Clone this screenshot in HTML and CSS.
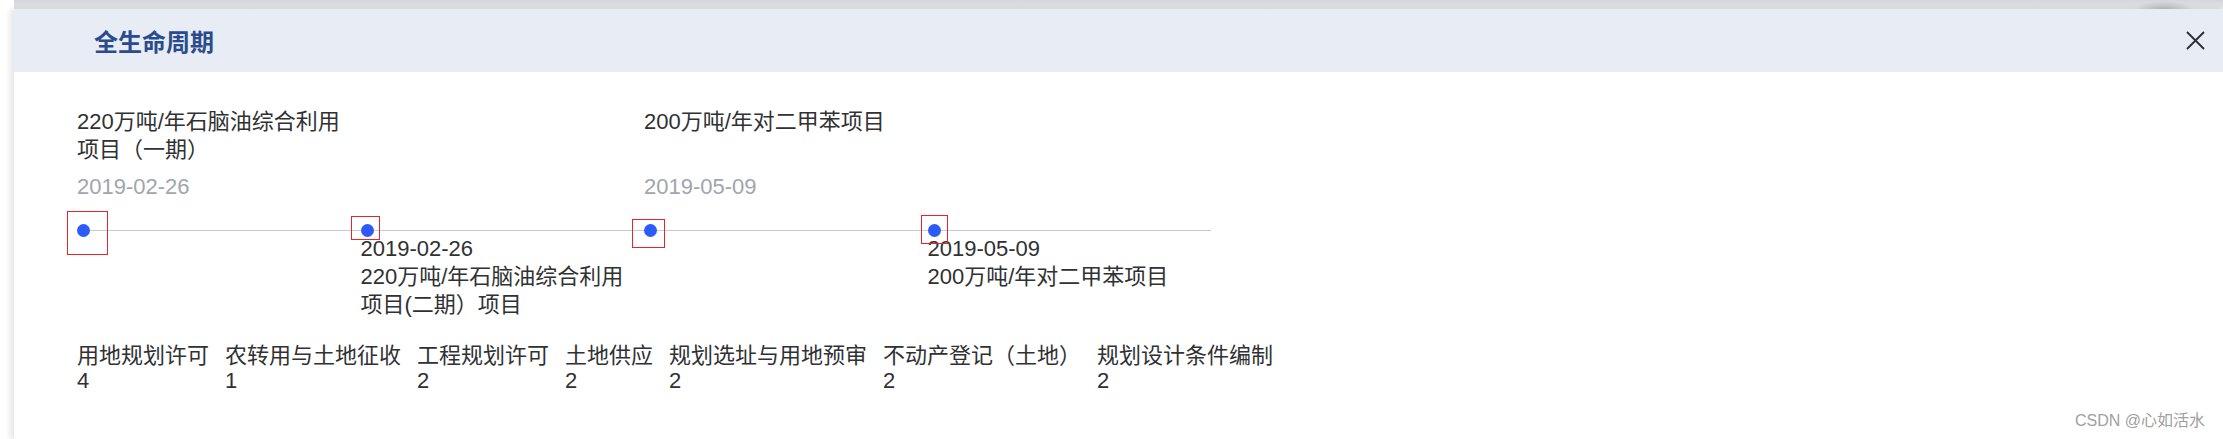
FILE: index.html
```html
<!DOCTYPE html>
<html lang="zh-CN">
<head>
  <meta charset="UTF-8">
  <meta name="viewport" content="width=device-width, initial-scale=1.0">
  <title>全生命周期</title>
  <link rel="stylesheet" href="styles.css">
</head>
<body>

  <div class="frame">
    <div class="top-shade"></div>

    <div class="dialog">
      <div class="dialog-header">
        <h2 class="dialog-title">全生命周期</h2>
        <svg class="close-btn" viewBox="0 0 19 19">
          <path d="M1 1 L18 18 M18 1 L1 18" stroke="#2b2d31" stroke-width="1.8" fill="none"/>
        </svg>
      </div>

      <div class="dialog-body">
        <div class="timeline">
          <div class="node">
            <div class="node-top">
              <p class="node-title">220万吨/年石脑油综合利用项目（一期）</p>
              <p class="node-date">2019-02-26</p>
            </div>
            <div class="node-axis">
              <span class="dot"></span>
              <span class="axis-line"></span>
              <span class="mark mark-1"></span>
            </div>
            <div class="node-bottom"></div>
          </div>

          <div class="node">
            <div class="node-top"></div>
            <div class="node-axis">
              <span class="dot"></span>
              <span class="axis-line"></span>
              <span class="mark mark-2"></span>
            </div>
            <div class="node-bottom">
              <p>2019-02-26</p>
              <p>220万吨/年石脑油综合利用项目(二期）项目</p>
            </div>
          </div>

          <div class="node">
            <div class="node-top">
              <p class="node-title">200万吨/年对二甲苯项目</p>
              <p class="node-date">2019-05-09</p>
            </div>
            <div class="node-axis">
              <span class="dot"></span>
              <span class="axis-line"></span>
              <span class="mark mark-3"></span>
            </div>
            <div class="node-bottom"></div>
          </div>

          <div class="node">
            <div class="node-top"></div>
            <div class="node-axis">
              <span class="dot"></span>
              <span class="axis-line"></span>
              <span class="mark mark-4"></span>
            </div>
            <div class="node-bottom">
              <p>2019-05-09</p>
              <p>200万吨/年对二甲苯项目</p>
            </div>
          </div>
        </div>

        <div class="stats">
          <div class="stat"><p>用地规划许可</p><p>4</p></div>
          <div class="stat"><p>农转用与土地征收</p><p>1</p></div>
          <div class="stat"><p>工程规划许可</p><p>2</p></div>
          <div class="stat"><p>土地供应</p><p>2</p></div>
          <div class="stat"><p>规划选址与用地预审</p><p>2</p></div>
          <div class="stat"><p>不动产登记（土地）</p><p>2</p></div>
          <div class="stat"><p>规划设计条件编制</p><p>2</p></div>
        </div>
      </div>

      <span class="watermark">CSDN @心如活水</span>
    </div>
  </div>

</body>
</html>
```

FILE: styles.css
```css
* {
  box-sizing: border-box;
  margin: 0;
  padding: 0;
}

body {
  width: 2223px;
  height: 439px;
  overflow: hidden;
  background: #fff;
  font-family: "Liberation Sans", "Noto Sans CJK SC", sans-serif;
  color: #303133;
}

.frame {
  margin-left: 14px;
  height: 100%;
  display: flex;
  flex-direction: column;
}

.top-shade {
  height: 9px;
  background: radial-gradient(ellipse 30px 8px at 2150px 9px, rgba(0, 0, 0, 0.18), transparent),
              linear-gradient(#d4d6d9, #e2e4e6);
}

.dialog {
  flex: 1;
  position: relative;
  background: #fff;
  box-shadow: -4px 0 6px rgba(0, 0, 0, 0.1);
}

.dialog-header {
  height: 63px;
  background: #e8ecf5;
  display: flex;
  align-items: center;
  justify-content: space-between;
  padding: 0 18px 0 80px;
}

.dialog-title {
  font-family: "Noto Sans CJK SC", sans-serif;
  font-size: 24px;
  font-weight: 700;
  color: #2a4b8d;
}

.close-btn {
  display: block;
  width: 19px;
  height: 19px;
}

.dialog-body {
  padding: 36px 0 0 63px;
}

/* timeline */
.timeline {
  display: flex;
}

.node {
  width: 283.5px;
  display: flex;
  flex-direction: column;
}

.node-top {
  height: 116px;
}

.node-title {
  width: 270px;
  height: 56px;
  font-size: 22px;
  line-height: 28px;
}

.node-date {
  margin-top: 9px;
  font-size: 22px;
  line-height: 28px;
  color: #a1a5ad;
}

.node-axis {
  position: relative;
  height: 13px;
  display: flex;
  align-items: center;
}

.dot {
  width: 13px;
  height: 13px;
  border-radius: 50%;
  background: #2d5bf7;
}

.axis-line {
  flex: 1;
  height: 1px;
  background: #c8c9d1;
}

.mark {
  position: absolute;
  border: 1px solid #e3262d;
}

.mark-1 { left: -10px; top: -13px; width: 41px; height: 44px; }
.mark-2 { left: -10px; top: -8px; width: 29px; height: 24px; }
.mark-3 { left: -12px; top: -5px; width: 33px; height: 29px; }
.mark-4 { left: -7px; top: -9px; width: 27px; height: 29px; }

.node-bottom {
  width: 270px;
  min-height: 84px;
  margin-top: -2px;
  font-size: 22px;
  line-height: 28px;
}

/* counts */
.stats {
  display: flex;
  gap: 16px;
  margin-top: 24px;
  font-size: 22px;
  line-height: 25px;
}

.watermark {
  position: absolute;
  right: 18px;
  top: 403px;
  font-size: 16px;
  line-height: 18px;
  color: #a0a0a0;
}
```
